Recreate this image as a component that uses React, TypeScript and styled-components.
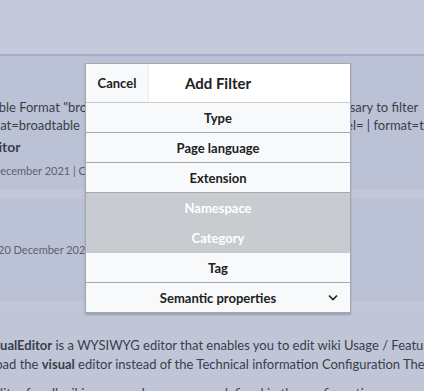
import React from 'react';
import styled, { createGlobalStyle } from 'styled-components';

const GlobalStyle = createGlobalStyle`
  html, body {
    margin: 0;
    padding: 0;
    width: 424px;
    height: 391px;
    overflow: hidden;
    background: #bcc2d6;
    font-family: Lato, "Open Sans", sans-serif;
  }
`;

const Page = styled.div`
  position: relative;
  width: 424px;
  height: 391px;
  overflow: hidden;
`;

const Header = styled.div`
  height: 54px;
  background: #c4cadb;
  border-bottom: 2px solid #a3adc9;
`;

const Feed = styled.div`
  display: flex;
  flex-direction: column;
  gap: 10px;
  background: #c1c7d9;
`;

const Card = styled.div<{ $pad: string; $light?: boolean; $lh?: number }>`
  background: ${(p) => (p.$light ? '#c0c6d8' : '#bcc2d6')};
  padding: ${(p) => p.$pad};
  color: #3a3e48;
  font-size: 13px;
  line-height: ${(p) => p.$lh || 18}px;
  white-space: nowrap;
`;

const Line = styled.div<{ $split: number; $gap?: number }>`
  display: grid;
  grid-template-columns: ${(p) => p.$split}px 1fr;
  margin-top: ${(p) => p.$gap || 0}px;
  overflow: hidden;
`;

const Clip = styled.span<{ $shift: number }>`
  margin-left: ${(p) => p.$shift}px;
`;

const Title = styled.div`
  margin-left: -55px;
  font-weight: 700;
  font-size: 14px;
  line-height: 20px;
  margin-top: 3px;
`;

const Meta = styled.div<{ $shift: number }>`
  margin-left: ${(p) => p.$shift}px;
  font-size: 11px;
  color: #5c616c;
  line-height: 16px;
  margin-top: 6px;
`;

const Overlay = styled.div`
  position: absolute;
  left: 85px;
  top: 63px;
  width: 264px;
  background: #f8f9fa;
  border: 1px solid #a2a9b1;
  box-shadow: 0 2px 2px rgba(0, 0, 0, 0.2);
  font-family: Lato, "Open Sans", sans-serif;
  color: #202122;
`;

const DialogHead = styled.div`
  display: grid;
  grid-template-columns: 63px 1fr 63px;
  height: 38px;
  background: #fff;
  border-bottom: 1px solid #c8ccd1;
`;

const CancelButton = styled.div`
  display: flex;
  align-items: center;
  justify-content: center;
  background: #f8f9fa;
  border-right: 1px solid #eaecf0;
  font-size: 13px;
  font-weight: 700;
  color: #202122;
`;

const DialogTitle = styled.div`
  display: flex;
  align-items: center;
  justify-content: center;
  font-size: 15px;
  font-weight: 700;
`;

const Option = styled.div<{ $disabled?: boolean }>`
  position: relative;
  display: flex;
  align-items: center;
  justify-content: center;
  height: 29px;
  font-size: 13px;
  font-weight: 700;
  background: ${(p) => (p.$disabled ? '#c8ccd1' : '#f8f9fa')};
  color: ${(p) => (p.$disabled ? '#fff' : '#202122')};
  border-bottom: 1px solid ${(p) => (p.$disabled ? '#c8ccd1' : '#a2a9b1')};
  &:last-child {
    border-bottom: none;
  }
`;

const Chevron = styled.svg`
  position: absolute;
  right: 12px;
  top: 11px;
`;

const options = [
  { label: 'Type' },
  { label: 'Page language' },
  { label: 'Extension' },
  { label: 'Namespace', disabled: true },
  { label: 'Category', disabled: true },
  { label: 'Tag' },
  { label: 'Semantic properties', more: true },
];

export default function App() {
  return (
    <Page>
      <GlobalStyle />
      <Header />
      <Feed>
        <Card $pad="42px 0 10px">
          <Line $split={317}>
            <Clip $shift={-14}>Table Format "broadtable"</Clip>
            <span>necessary to filter</span>
          </Line>
          <Line $split={326}>
            <Clip $shift={-27}>format=broadtable</Clip>
            <span>|label= | format=table</span>
          </Line>
          <Title>VisualEditor</Title>
          <Meta $shift={-8}>December 2021 | Changes</Meta>
        </Card>
        <Card $pad="37px 0 43px">
          <Meta $shift={-2}>20 December 2021</Meta>
        </Card>
        <Card $pad="25px 0 0" $light $lh={19}>
          <Line $split={424}>
            <Clip $shift={-18}>
              <b>VisualEditor</b> is a WYSIWYG editor that enables you to edit wiki Usage / Features
            </Clip>
          </Line>
          <Line $split={424}>
            <Clip $shift={-11}>
              Load the <b>visual</b> editor instead of the Technical information Configuration The
            </Clip>
          </Line>
          <Line $split={424} $gap={10}>
            <Clip $shift={-11}>editor for all wiki pages and namespaces defined in the configuration</Clip>
          </Line>
        </Card>
      </Feed>
      <Overlay>
        <DialogHead>
          <CancelButton>Cancel</CancelButton>
          <DialogTitle>Add Filter</DialogTitle>
          <div />
        </DialogHead>
        {options.map((o) => (
          <Option key={o.label} $disabled={o.disabled}>
            {o.label}
            {o.more && (
              <Chevron width="10" height="7" viewBox="0 0 10 7">
                <path d="M1 1.5 L5 5.5 L9 1.5" fill="none" stroke="#202122" strokeWidth="1.6" />
              </Chevron>
            )}
          </Option>
        ))}
      </Overlay>
    </Page>
  );
}
